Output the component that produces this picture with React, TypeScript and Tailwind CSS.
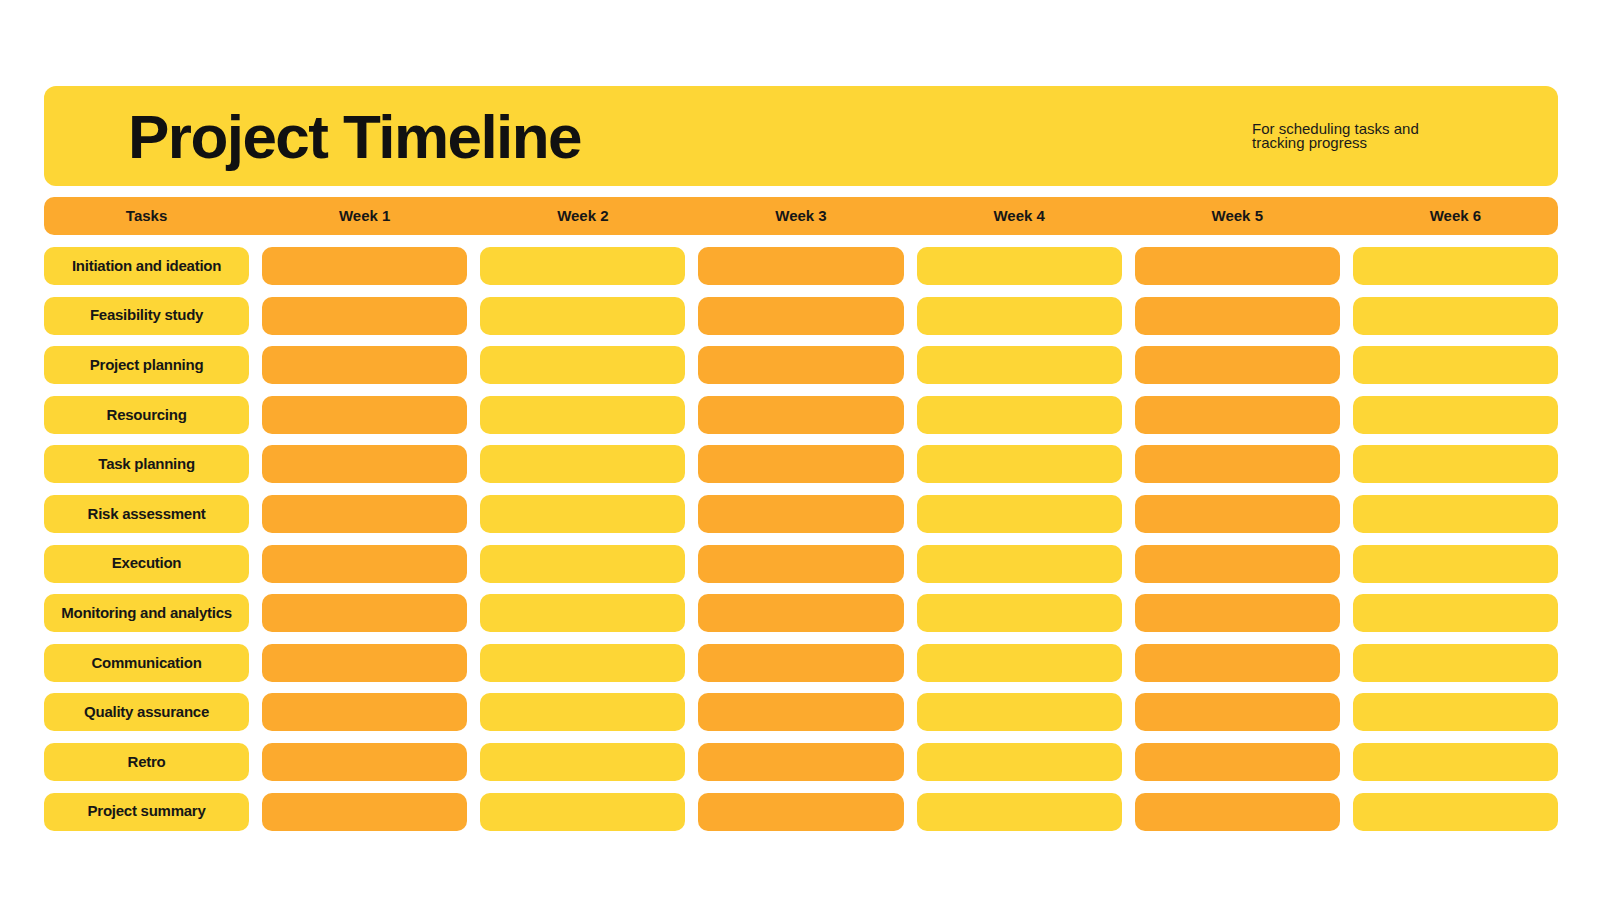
const tasks = [
  "Initiation and ideation",
  "Feasibility study",
  "Project planning",
  "Resourcing",
  "Task planning",
  "Risk assessment",
  "Execution",
  "Monitoring and analytics",
  "Communication",
  "Quality assurance",
  "Retro",
  "Project summary",
];

const weeks = ["Week 1", "Week 2", "Week 3", "Week 4", "Week 5", "Week 6"];

export default function App() {
  return (
    <main className="min-h-screen w-full bg-white pt-[86px] pl-[44px] pr-[42px] font-['Liberation_Sans',Arial,sans-serif] text-[#161616]">
      {/* Title banner */}
      <header className="flex h-[100px] items-center rounded-[12px] bg-[#FDD636] pl-[84px]">
        <h1 className="pt-[2px] text-[62px] font-bold leading-none tracking-[-0.025em] text-[#111]">
          Project Timeline
        </h1>
        <p className="ml-auto mr-[134px] w-[172px] text-[15px] leading-[14px] text-[#1a1a1a]">
          For scheduling tasks and tracking progress
        </p>
      </header>

      {/* Week header */}
      <div className="mt-[11px] grid h-[38px] grid-cols-7 items-center gap-[13px] rounded-[10px] bg-[#FCAA2E] text-[15px] font-bold">
        <div className="text-center">Tasks</div>
        {weeks.map((w) => (
          <div key={w} className="text-center">
            {w}
          </div>
        ))}
      </div>

      {/* Task rows */}
      <div className="mt-[12px] flex flex-col gap-[11.6px]">
        {tasks.map((t) => (
          <div key={t} className="grid h-[38px] grid-cols-7 gap-[13px]">
            <div className="flex items-center justify-center rounded-[10px] bg-[#FDD636] text-[15px] font-bold tracking-[-0.25px]">
              {t}
            </div>
            {weeks.map((w, i) => (
              <div
                key={w}
                className={i % 2 === 0 ? "rounded-[10px] bg-[#FCAA2E]" : "rounded-[10px] bg-[#FDD636]"}
              />
            ))}
          </div>
        ))}
      </div>
    </main>
  );
}
